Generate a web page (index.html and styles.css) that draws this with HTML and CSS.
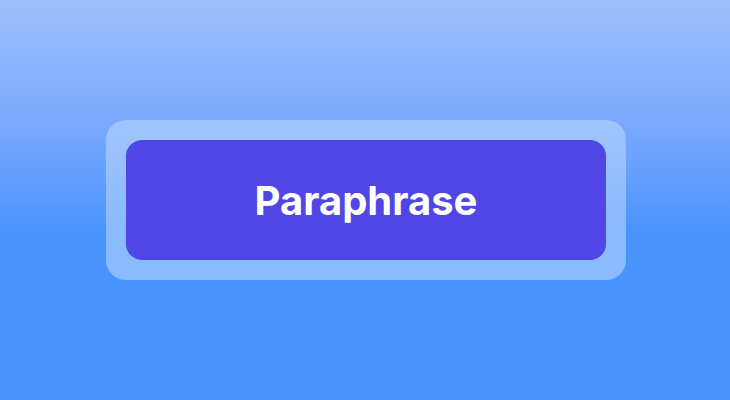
FILE: index.html
```html
<!DOCTYPE html>
<html lang="en">
<head>
    <meta charset="UTF-8">
    <meta name="viewport" content="width=device-width, initial-scale=1.0">
    <title>Paraphrase</title>
    <link rel="stylesheet" href="styles.css">
</head>
<body>
    <div class="ring">
        <button type="button" class="action">Paraphrase</button>
    </div>
</body>
</html>
```

FILE: styles.css
```css
body {
    font-family: 'Inter', sans-serif;
    margin: 0;
    padding: 0 0 0 2px;
    height: 100vh;
    display: flex;
    align-items: center;
    justify-content: center;
    background: linear-gradient(to bottom, #9fc0fd 0%, #7caafd 30%, #4a94fe 58%, #4a94fe 100%);
}

/* light halo round the button */
.ring {
    padding: 20px;
    border-radius: 20px;
    background-color: rgba(191, 219, 254, 0.55);
}

.action {
    display: block;
    width: 480px;
    height: 120px;
    border: none;
    border-radius: 16px;
    background-color: #4f46e5;
    color: #ffffff;
    font-family: 'Inter', sans-serif;
    font-size: 40px;
    font-weight: 700;
    cursor: pointer;
}
```
